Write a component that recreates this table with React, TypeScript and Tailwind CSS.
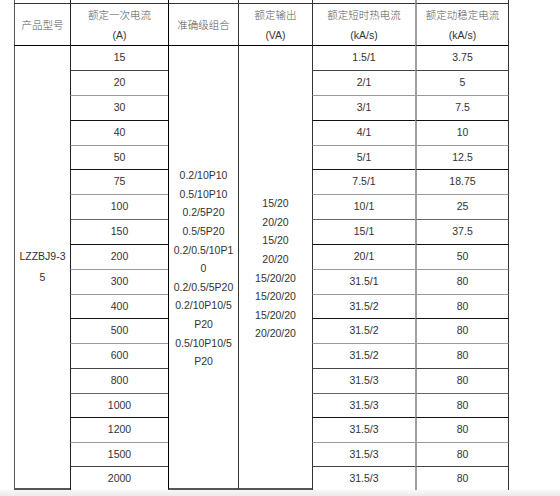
import { Fragment } from "react"

const FONT = "font-['Liberation_Sans','Noto_Sans_CJK_SC',sans-serif]"

// one row per primary current rating
const ROWS = [
  { amps: "15",   thermal: "1.5/1",  dynamic: "3.75"  },
  { amps: "20",   thermal: "2/1",    dynamic: "5"     },
  { amps: "30",   thermal: "3/1",    dynamic: "7.5"   },
  { amps: "40",   thermal: "4/1",    dynamic: "10"    },
  { amps: "50",   thermal: "5/1",    dynamic: "12.5"  },
  { amps: "75",   thermal: "7.5/1",  dynamic: "18.75" },
  { amps: "100",  thermal: "10/1",   dynamic: "25"    },
  { amps: "150",  thermal: "15/1",   dynamic: "37.5"  },
  { amps: "200",  thermal: "20/1",   dynamic: "50"    },
  { amps: "300",  thermal: "31.5/1", dynamic: "80"    },
  { amps: "400",  thermal: "31.5/2", dynamic: "80"    },
  { amps: "500",  thermal: "31.5/2", dynamic: "80"    },
  { amps: "600",  thermal: "31.5/2", dynamic: "80"    },
  { amps: "800",  thermal: "31.5/3", dynamic: "80"    },
  { amps: "1000", thermal: "31.5/3", dynamic: "80"    },
  { amps: "1200", thermal: "31.5/3", dynamic: "80"    },
  { amps: "1500", thermal: "31.5/3", dynamic: "80"    },
  { amps: "2000", thermal: "31.5/3", dynamic: "80"    },
]

// top rule of each body row (the scan renders them at different strengths)
const RULE = [
  "border-t-black",  "border-t-[#444]", "border-t-[#9a9a9a]", "border-t-[#111]",
  "border-t-[#9a9a9a]", "border-t-[#111]", "border-t-[#9a9a9a]", "border-t-[#666]",
  "border-t-[#111]", "border-t-[#9a9a9a]", "border-t-[#9a9a9a]", "border-t-[#111]",
  "border-t-[#9a9a9a]", "border-t-[#444]", "border-t-[#666]", "border-t-[#111]",
  "border-t-[#9a9a9a]", "border-t-[#444]",
]

const ACCURACY = [
  "0.2/10P10", "0.5/10P10", "0.2/5P20", "0.5/5P20", "0.2/0.5/10P1", "0",
  "0.2/0.5/5P20", "0.2/10P10/5", "P20", "0.5/10P10/5", "P20",
]

const OUTPUT = [
  "15/20", "20/20", "15/20", "20/20", "15/20/20", "15/20/20", "15/20/20", "20/20/20",
]

// left rule of each column
const COL_L = [
  "border-l border-l-[#555]",
  "border-l border-l-[#222]",
  "border-l border-l-black",
  "border-l border-l-[#333]",
  "border-l border-l-[#333]",
  "border-l-2 border-l-[#a0a0a0] border-r border-r-[#333]",
]

const HEADERS: string[][] = [
  ["产品型号"],
  ["额定一次电流", "(A)"],
  ["准确级组合"],
  ["额定输出", "(VA)"],
  ["额定短时热电流", "(kA/s)"],
  ["额定动稳定电流", "(kA/s)"],
]

function Lines({ lines, leading }: { lines: string[]; leading: string }) {
  return (
    <div className={`text-center ${leading}`}>
      {lines.map((l, i) => (
        <div key={i}>{l}</div>
      ))}
    </div>
  )
}

export default function App() {
  return (
    <div className={`flex h-[496px] w-[560px] flex-col overflow-hidden bg-white text-[10.5px] text-[#333] ${FONT}`}>
      <div className="ml-[14px] grid grid-cols-[56px_98px_70px_74px_103px_94px] grid-rows-[3px_42px_25px_25px_25px_25px_24px_25px_25px_25px_25px_25px_24px_25px_25px_25px_24px_25px_24px_24px]">
        {/* stub of the rules above the header */}
        {COL_L.map((c, i) => (
          <div key={`s${i}`} className={c} />
        ))}

        {/* header */}
        {HEADERS.map((h, i) => (
          <div
            key={`h${i}`}
            className={`flex items-center justify-center border-t border-t-[#333] ${COL_L[i]}`}
          >
            <div className="text-center leading-[20px]">
              <div className="font-light text-[#555]">{h[0]}</div>
              {h[1] && <div>{h[1]}</div>}
            </div>
          </div>
        ))}

        {ROWS.map((r, i) => (
          <Fragment key={r.amps}>
            {i === 0 && (
              <div className={`row-span-18 flex items-center justify-center border-t border-b-2 border-b-[#555] ${RULE[0]} ${COL_L[0]}`}>
                <Lines lines={["LZZBJ9-3", "5"]} leading="leading-[21px]" />
              </div>
            )}
            <div className={`flex items-center justify-center border-t ${RULE[i]} ${COL_L[1]}`}>{r.amps}</div>
            {i === 0 && (
              <>
                <div className={`row-span-18 flex items-center justify-center border-t border-b-2 border-b-[#555] pt-[3px] ${RULE[0]} ${COL_L[2]}`}>
                  <Lines lines={ACCURACY} leading="leading-[18.6px]" />
                </div>
                <div className={`row-span-18 flex items-center justify-center border-t border-b-2 border-b-[#555] pt-[3px] ${RULE[0]} ${COL_L[3]}`}>
                  <Lines lines={OUTPUT} leading="leading-[18.6px]" />
                </div>
              </>
            )}
            <div className={`flex items-center justify-center border-t ${RULE[i]} ${COL_L[4]}`}>{r.thermal}</div>
            <div className={`flex items-center justify-center border-t ${RULE[i]} ${COL_L[5]}`}>{r.dynamic}</div>
          </Fragment>
        ))}
      </div>

      {/* scroll shadow at the foot */}
      <div className="h-[6px] w-full shrink-0 bg-gradient-to-b from-[#f7f7f7] to-[#ebebeb]" />
    </div>
  )
}
